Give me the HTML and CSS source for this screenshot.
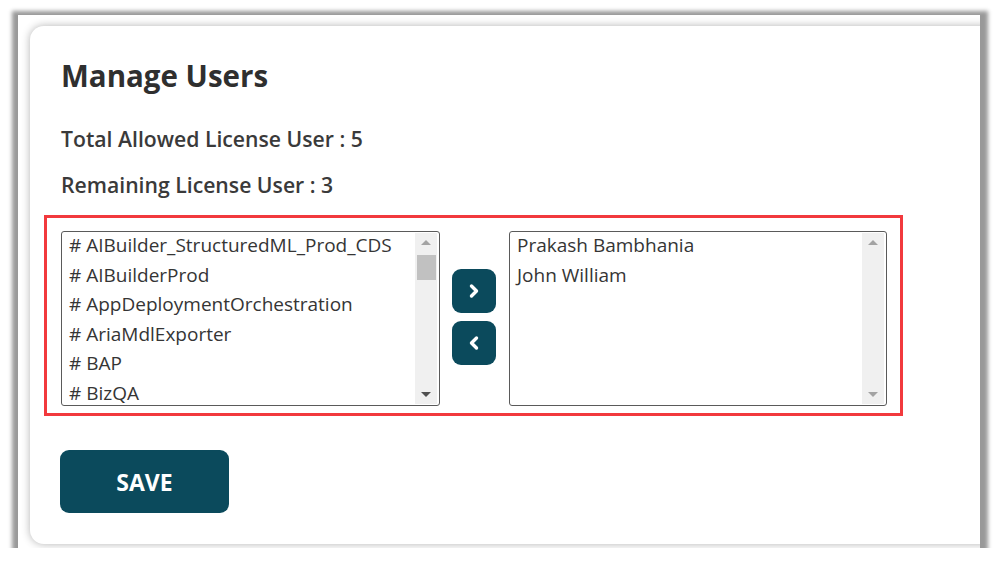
FILE: index.html
```html
<!DOCTYPE html>
<html>
<head>
<meta charset="utf-8">
<link rel="stylesheet" href="styles.css">
</head>
<body>
<div class="frame">
  <div class="card">
    <h1 class="title">Manage Users</h1>
    <p class="info">Total Allowed License User : 5</p>
    <p class="info info2">Remaining License User : 3</p>
    <div class="picker">
      <div class="listbox">
        <ul class="items">
          <li># AIBuilder_StructuredML_Prod_CDS</li>
          <li># AIBuilderProd</li>
          <li># AppDeploymentOrchestration</li>
          <li># AriaMdlExporter</li>
          <li># BAP</li>
          <li># BizQA</li>
        </ul>
        <div class="scroll">
          <span class="arrow up"></span>
          <span class="thumb"></span>
          <span class="arrow down"></span>
        </div>
      </div>
      <div class="moves">
        <button class="move"><svg width="12" height="16" viewBox="0 0 12 16"><path d="M3.5 3 L8.5 8 L3.5 13" fill="none" stroke="#fff" stroke-width="3.4" stroke-linecap="round" stroke-linejoin="round"/></svg></button>
        <button class="move"><svg width="12" height="16" viewBox="0 0 12 16"><path d="M8.5 3 L3.5 8 L8.5 13" fill="none" stroke="#fff" stroke-width="3.4" stroke-linecap="round" stroke-linejoin="round"/></svg></button>
      </div>
      <div class="listbox">
        <ul class="items">
          <li>Prakash Bambhania</li>
          <li>John William</li>
        </ul>
        <div class="scroll">
          <span class="arrow up"></span>
          <span class="spacer"></span>
          <span class="arrow down"></span>
        </div>
      </div>
    </div>
    <button class="save">SAVE</button>
  </div>
</div>
</body>
</html>
```
FILE: styles.css
```css
html, body {
  margin: 0;
  padding: 0;
  background: #fff;
}
body {
  font-family: "Open Sans", "Liberation Sans", sans-serif;
  color: #333;
  padding: 15px 0 0 18px;
}
.frame {
  width: 962px;
  height: 533px;
  background: #fff;
  box-shadow: 1px 3px 4px 7px rgba(0, 0, 0, 0.4);
  overflow: hidden;
  padding: 11px 0 0 12px;
  box-sizing: border-box;
}
.card {
  width: 1000px;
  height: 518px;
  background: #fff;
  border-radius: 14px;
  box-shadow: 0 0 9px rgba(0, 0, 0, 0.3);
  padding: 32px 0 0 31px;
  box-sizing: border-box;
}
.title {
  margin: 0;
  font-size: 29.5px;
  font-weight: 700;
  line-height: 36px;
  color: #2f2f2f;
}
.info {
  margin: 32px 0 0 0;
  font-size: 21.2px;
  font-weight: 600;
  line-height: 26px;
  color: #3a3a3a;
}
.info2 {
  margin-top: 20px;
}
.picker {
  margin: 17px 0 0 -17px;
  width: 859px;
  height: 201px;
  box-sizing: border-box;
  border: 3px solid #f2393d;
  padding: 13px 13px 0 14px;
  display: flex;
  align-items: flex-start;
}
.listbox {
  width: 380px;
  height: 175px;
  box-sizing: border-box;
  border: 1px solid #5a5a5a;
  border-radius: 3px;
  display: flex;
  background: #fff;
}
.listbox + .moves + .listbox {
  width: 379px;
}
.items {
  list-style: none;
  margin: -1px 0 0 0;
  padding: 0 0 0 7px;
  flex: 1;
  overflow: hidden;
  font-size: 19px;
  line-height: 29.6px;
  color: #353535;
  white-space: nowrap;
}
.scroll {
  width: 22px;
  margin: 1px 2px 1px 0;
  background: #f0f0f0;
  display: flex;
  flex-direction: column;
  align-items: center;
}
.arrow {
  width: 0;
  height: 0;
  border-left: 5px solid transparent;
  border-right: 5px solid transparent;
}
.arrow.up {
  border-bottom: 5px solid #a3a3a3;
  margin-top: 7px;
}
.arrow.down {
  border-top: 5px solid #505050;
  margin-bottom: 7px;
  margin-top: auto;
}
.listbox + .moves + .listbox .arrow.down {
  border-top-color: #a3a3a3;
}
.thumb {
  width: 19px;
  height: 25px;
  background: #c1c1c1;
  margin-top: 10px;
}
.spacer {
  flex: 1;
}
.moves {
  display: flex;
  flex-direction: column;
  gap: 8px;
  margin: 38px 13px 0 12px;
}
.move {
  width: 44px;
  height: 44px;
  border: none;
  border-radius: 9px;
  background: #0b4a5c;
  display: flex;
  align-items: center;
  justify-content: center;
  padding: 0;
}
.save {
  display: flex;
  align-items: center;
  justify-content: center;
  margin: 34px 0 0 -1px;
  width: 169px;
  height: 63px;
  border: none;
  border-radius: 9px;
  background: #0b4a5c;
  color: #fff;
  font-family: "Open Sans", "Liberation Sans", sans-serif;
  font-size: 23px;
  font-weight: 700;
  padding: 0;
}
```
